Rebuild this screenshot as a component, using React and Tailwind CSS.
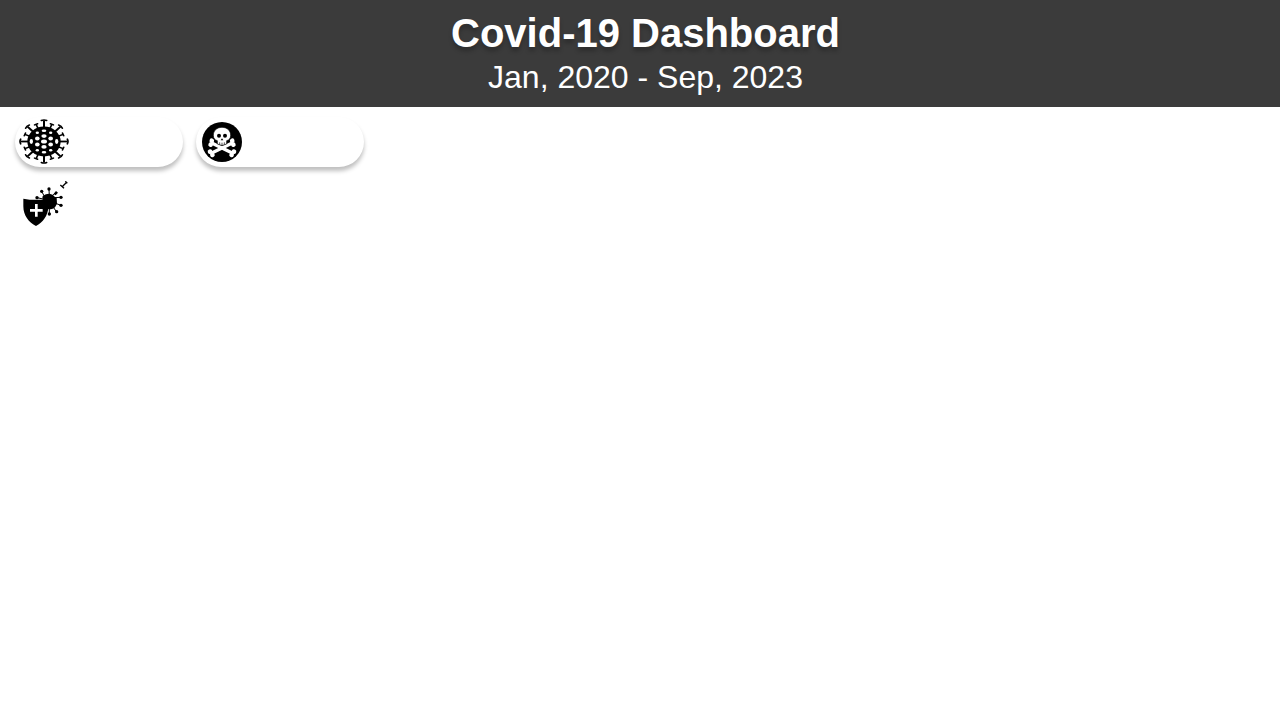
const LONG_SPIKES = [0, 45, 90, 135, 180, 225, 270, 315];
const SHORT_SPIKES = [22.5, 67.5, 112.5, 157.5, 202.5, 247.5, 292.5, 337.5];

const SPOTS = [
  [0, 0, 9, 7],
  [0, -18, 8, 6],
  [0, 18, 8, 6],
  [0, -36, 7, 4],
  [0, 36, 7, 4],
  [-20, -10, 7, 7],
  [20, -10, 7, 7],
  [-20, 10, 7, 7],
  [20, 10, 7, 7],
  [-20, -29, 5, 4],
  [20, -29, 5, 4],
  [-20, 29, 5, 4],
  [20, 29, 5, 4],
  [-38, 0, 5, 8],
  [38, 0, 5, 8],
];

function VirusIcon() {
  return (
    <svg viewBox="-75 -75 150 150" preserveAspectRatio="none" className="h-[45px] w-[50px]" aria-hidden="true">
      {LONG_SPIKES.map((a) => (
        <g key={a} transform={`rotate(${a})`} fill="none" stroke="black">
          <path d="M0-46V-70" strokeWidth="6" />
          <path d="M-8-70Q0-74 8-70" strokeWidth="5" strokeLinecap="round" />
        </g>
      ))}
      {SHORT_SPIKES.map((a) => (
        <g key={a} transform={`rotate(${a})`} fill="none" stroke="black">
          <path d="M0-44V-62" strokeWidth="5" />
          <path d="M-5-62H5" strokeWidth="5" strokeLinecap="round" />
        </g>
      ))}
      <circle r="50" />
      {SPOTS.map(([x, y, rx, ry]) => (
        <ellipse key={`${x},${y}`} cx={x} cy={y} rx={rx} ry={ry} fill="white" />
      ))}
    </svg>
  );
}

function Bone({ angle }) {
  return (
    <g transform={`translate(60 78) rotate(${angle})`} fill="white">
      <rect x="-36" y="-5" width="72" height="10" />
      <circle cx="-37" cy="-6" r="7" />
      <circle cx="-35" cy="6" r="7" />
      <circle cx="37" cy="-6" r="7" />
      <circle cx="35" cy="6" r="7" />
    </g>
  );
}

function SkullIcon() {
  return (
    <svg viewBox="0 0 120 120" className="size-10" aria-hidden="true">
      <circle cx="60" cy="60" r="60" />
      <Bone angle={26} />
      <Bone angle={-26} />
      <path
        d="M60 16C43 16 34 27 34 40C34 49 38 54 46 56V66Q60 75 74 66V56C82 54 86 49 86 40C86 27 77 16 60 16Z"
        fill="white"
        stroke="black"
        strokeWidth="2"
      />
      <circle cx="51" cy="41" r="6" />
      <circle cx="69" cy="41" r="6" />
      <path d="M60 49L64 55H56Z" />
      <path d="M53 61V68M60 62V70M67 61V68" stroke="black" strokeWidth="2" />
    </svg>
  );
}

function VaccineIcon() {
  return (
    <svg viewBox="0 0 135 138" className="h-[46px] w-[45px]" aria-hidden="true">
      <g stroke="black" strokeWidth="3">
        <path d="M79 46L78 24M66 50L56 31M60 54L42 50M95 50L112 49M95 66L114 73M88 74L100 92M79 72V98M90 42L98 36" />
        <path d="M119 16L131 4M112 12L123 22M127 1L133 7" strokeWidth="4" />
      </g>
      <circle cx="78" cy="24" r="5" />
      <circle cx="56" cy="31" r="5" />
      <circle cx="42" cy="50" r="5" />
      <circle cx="114" cy="49" r="5" />
      <circle cx="114" cy="73" r="5" />
      <circle cx="101" cy="92" r="5" />
      <circle cx="79" cy="99" r="5" />
      <path d="M92 38L99 30L105 35L98 43Z" />
      <path d="M58 47Q65 38 79 38L89 41L95 47L101 51L102 68L97 77Q91 85 77 85L62 76Z" />
      <path d="M1 53Q39 60 76 53V76C76 104 59 125 39 135C18 125 1 104 1 76Z" />
      <path d="M36 69H44V84H59V92H44V107H36V92H21V84H36Z" fill="white" />
    </svg>
  );
}

export default function App() {
  return (
    <div className="min-h-screen bg-white font-['Liberation_Sans',Arial,sans-serif]">
      <header className="bg-[#3b3b3b] pt-2 pb-[11px] pl-[11px] text-center text-white">
        <h1 className="text-[40px] leading-[50px] font-bold [text-shadow:0_4px_4px_rgba(0,0,0,0.25)]">
          Covid-19 Dashboard
        </h1>
        <p className="text-[32px] leading-[38px]">Jan, 2020 - Sep, 2023</p>
      </header>
      <main className="px-[15px] pt-[10px]">
        <div className="flex gap-[13px]">
          <section
            aria-label="Cases"
            className="flex h-[50px] w-[168px] items-start rounded-[25px] bg-white pt-[2px] pl-1 shadow-[0_4px_4px_rgba(0,0,0,0.25)]"
          >
            <VirusIcon />
          </section>
          <section
            aria-label="Deaths"
            className="flex h-[50px] w-[168px] items-center rounded-[25px] bg-white pl-[6px] shadow-[0_4px_4px_rgba(0,0,0,0.25)]"
          >
            <SkullIcon />
          </section>
        </div>
        <section aria-label="Vaccinations" className="pt-[14px] pl-2">
          <VaccineIcon />
        </section>
      </main>
    </div>
  );
}
